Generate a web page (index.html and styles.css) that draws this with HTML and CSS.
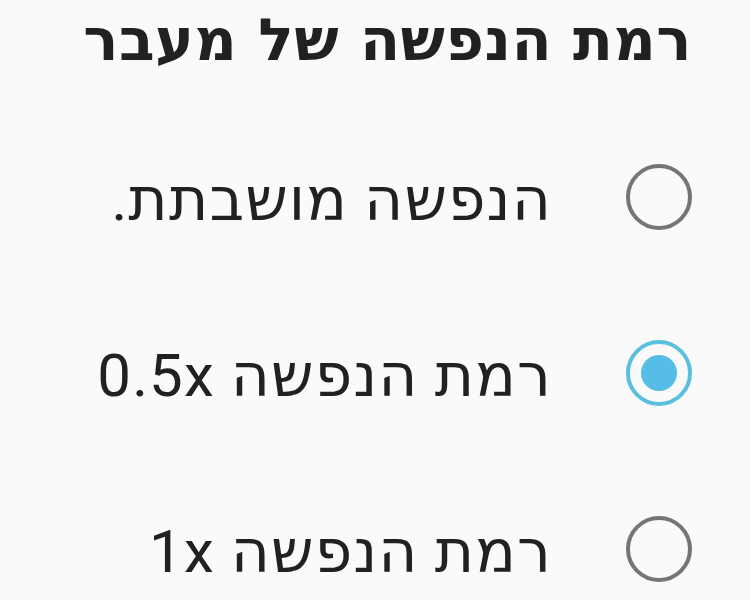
FILE: index.html
```html
<!DOCTYPE html>
<html lang="he" dir="rtl">

<head>
    <meta charset="UTF-8">
    <meta name="viewport" content="width=device-width, initial-scale=1.0">
    <title>רמת הנפשה של מעבר</title>
    <link rel="stylesheet" href="styles.css">
</head>

<body>
    <div class="dialog">
        <h1 class="title">רמת הנפשה של מעבר</h1>
        <ul class="options">
            <li class="option">
                <span class="radio"></span>
                <span class="label">הנפשה מושבתת.</span>
            </li>
            <li class="option">
                <span class="radio checked"></span>
                <span class="label">רמת הנפשה 0.5x</span>
            </li>
            <li class="option">
                <span class="radio"></span>
                <span class="label">רמת הנפשה 1x</span>
            </li>
        </ul>
    </div>
</body>

</html>
```

FILE: styles.css
```css
body {
    margin: 0;
    background-color: #fafafa;
    font-family: Roboto, 'DejaVu Sans', 'Liberation Sans', sans-serif;
    color: #212121;
    overflow: hidden;
}

.dialog {
    padding: 0 58px 0 30px;
}

.title {
    margin: 0;
    font-family: 'DejaVu Sans', sans-serif;
    font-size: 58.5px;
    font-weight: bold;
    letter-spacing: 0.5px;
    line-height: 80px;
}

.options {
    list-style: none;
    margin: 0;
    padding: 0;
    padding-top: 75px;
    display: flex;
    flex-direction: column;
    gap: 96px;
}

.option {
    display: flex;
    align-items: center;
    gap: 74px;
    height: 80px;
}

.radio {
    width: 58px;
    height: 58px;
    border: 4px solid #757575;
    border-radius: 50%;
    flex-shrink: 0;
    position: relative;
    margin-top: 4px;
}

.radio.checked {
    border-color: #5bc0de;
}

.radio.checked::after {
    content: "";
    position: absolute;
    top: 11px;
    left: 11px;
    width: 36px;
    height: 36px;
    border-radius: 50%;
    background-color: #55bde6;
}

.label {
    font-size: 60px;
    letter-spacing: 1.1px;
    margin-top: 8px;
}
```
